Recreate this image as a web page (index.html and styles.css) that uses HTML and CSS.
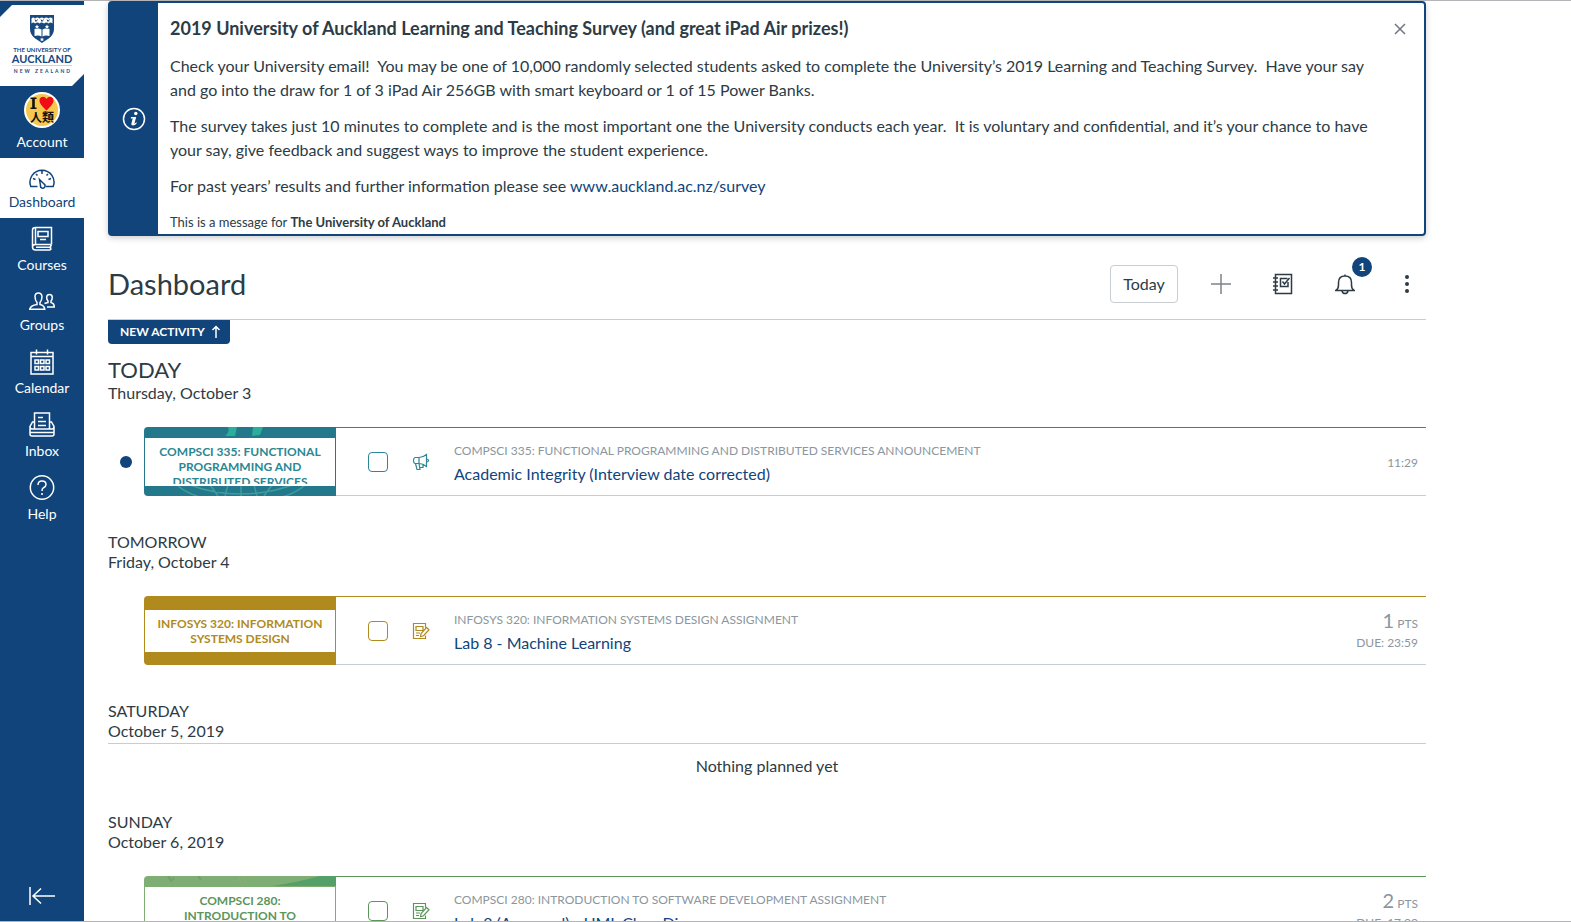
FILE: index.html
```html
<!DOCTYPE html>
<html lang="en">
<head>
<meta charset="utf-8">
<title>Dashboard</title>
<meta name="viewport" content="width=device-width, initial-scale=1">
<link rel="stylesheet" href="styles.css">
</head>
<body>
<svg width="0" height="0" class="defs" aria-hidden="true">
  <symbol id="i-assign" viewBox="0 0 18 18"><path d="M13.500 5.500V1.500H1.500V16.500H13.500V13.500M4 4.500h7v4H4zM4 11h4M4 13.500h3M14.500 5.500l2.500 2.200-5.500 6-3 1 .6-3.200z"/></symbol>
</svg>
<div class="app">
  <nav class="sidebar" aria-label="Global navigation">
    <a class="logo" href="#" aria-label="The University of Auckland">
      <svg viewBox="0 1 84 85" width="84" height="85">
        <path d="M12 5H84V74L72 86H0V17z" fill="#fff"/>
        <path d="M30 15H54V29c0 7-6 10-12 14c-6-4-12-7-12-14z" fill="#17497e"/>
        <path d="M31.500 23.500v-5q1.500-2 3.500 0q2.500-2 4.500 0q2.500-2 4.500 0q2.500-2 4.500 0q2-2 4 0v5q-2-2-4 0q-2-2-4.500 0q-2.500-2-4.500 0q-2-2-4.500 0q-1.500-2-3.500 0z" fill="#fff"/>
        <path d="M35 19.500l1 2 1.500-2M41 19.500l1 2 1.500-2M47 19.500l1 2 1.500-2" stroke="#17497e" fill="none"/>
        <path d="M34.500 29q4-1.200 7 .5v7q-3-1.500-7-.5zM49.500 29q-4-1.200-7 .5v7q3-1.500 7-.5z" fill="#fff"/>
        <path d="M37 24.500l.7 1.500h1.500l-1.200 1 .5 1.500-1.500-.8-1.500.8.500-1.500-1.200-1h1.500zM47 24.500l.7 1.500h1.500l-1.200 1 .5 1.500-1.500-.8-1.500.8.500-1.500-1.200-1h1.500zM42 37.500l.7 1.300h1.500l-1.200 1 .5 1.500-1.500-.8-1.500.8.500-1.500-1.200-1h1.500z" fill="#fff"/>
        <path d="M12 65.500H72" stroke="#c9d3df"/>
        <g fill="#17497e" text-anchor="middle" class="logo-text">
          <text x="42" y="52" class="logo-s">THE UNIVERSITY OF</text>
          <text x="42" y="63" class="logo-l">AUCKLAND</text>
          <text x="43" y="73" class="logo-n">NEW ZEALAND</text>
        </g>
      </svg>
    </a>
    <a class="nav-item account" href="#">
      <svg viewBox="0 0 36 36" width="36" height="36">
        <circle cx="18" cy="18" r="17" fill="#f7c84e" stroke="#fff" stroke-width="2"/>
        <path d="M6.500 5.500h6v1.500h-1.700v8.500h1.700v1.500h-6v-1.500h1.700v-8.500h-1.700z" fill="#111"/>
        <path d="M22.500 18.500C18 14 15.500 11.500 15.500 8.500c0-4 5-5 7-1.500c2-3.500 7-2.500 7 1.500c0 3-2.500 5.500-7 10z" fill="#f00b16"/>
        <text x="18" y="30" text-anchor="middle" class="avatar-text">人類</text>
      </svg>
      <span>Account</span>
    </a>
    <a class="nav-item active" href="#" aria-current="page">
      <svg class="icon" viewBox="0 0 26 26" width="26" height="26"><path d="M8.500 20.500H1.800A12 12 0 1 1 24.200 20.500H17M13 4.500v3.500M4 12.500l2.500 1M22 12.500l-2.500 1M7 8l1.500 1.500M19 8l-1.500 1.500M10.500 13.500l4.500 4.500a2.300 2.300 0 1 1-3.500 1.500z"/></svg>
      <span>Dashboard</span>
    </a>
    <a class="nav-item tall" href="#">
      <svg class="icon" viewBox="0 0 26 26" width="26" height="26"><path d="M22.500 18.500V1.500H6.500Q3.500 1.500 3.500 4V21Q3.500 24 6.500 24H21.500M22.500 18.500H6.500Q3.500 18.500 3.500 21M22.500 18.500Q20.500 21 22 24M7 21.300H21M6.500 1.500V18.500M9 5.500h10v5H9zM11 13.500h6"/></svg>
      <span>Courses</span>
    </a>
    <a class="nav-item" href="#">
      <svg class="icon" viewBox="0 0 26 26" width="26" height="26"><path d="M.7 20.300H15.800Q15.500 16.500 11 15.500V13.500Q13 11 13 7.500Q12.500 4 9.500 4Q6 4 6 7.500Q6 11 8 13.500V15.500Q1.500 16.500 .7 20.300zM15.500 14.500Q17 13.800 19 13.500V12Q17.500 10.500 17.700 8Q18 5.500 20.500 5.500Q23.300 5.500 23.300 8.500Q23.300 10.500 22 12V13.500Q25.300 14.500 25.300 18H18"/></svg>
      <span>Groups</span>
    </a>
    <a class="nav-item tall" href="#">
      <svg class="icon" viewBox="0 0 26 26" width="26" height="26"><path d="M2 3.500h22v21.500H2zM2 7.500h22M7.500 .5v5M18.500 .5v5M6 11h3.500v3.500H6zM11.500 11h3.500v3.500h-3.500zM17 11h3.500v3.500H17zM6 17.500h3.500V21H6zM11.500 17.500h3.500V21h-3.500zM17 17.500h3.500V21H17z"/></svg>
      <span>Calendar</span>
    </a>
    <a class="nav-item tall" href="#">
      <svg class="icon" viewBox="0 0 26 26" width="26" height="26"><path d="M5.500 17V1H20.500V17M5.500 10H3.500L1 14.500V22Q1 24 3 24H23Q25 24 25 22V14.500L22.500 10H20.500M1 14.500Q1 17 3 17H23Q25 17 25 14.500M1 20.500H25M9 5.500h5M9 9.500h8M9 13.500h8"/></svg>
      <span>Inbox</span>
    </a>
    <a class="nav-item tall" href="#">
      <svg class="icon" viewBox="0 0 26 26" width="26" height="26"><circle cx="13" cy="12.500" r="11.700"/><path d="M9 10Q9 6 13 6Q17 6 17 9.500Q17 11.500 14.500 12.700Q13 13.500 13 16M13 18v2"/></svg>
      <span>Help</span>
    </a>
    <button class="collapse" type="button" aria-label="Minimise navigation">
      <svg class="icon" viewBox="0 0 28 20" width="28" height="20"><path d="M2 1v18M27 10H5M13 2.500L5 10l8 7.500"/></svg>
    </button>
  </nav>

  <main class="main">
    <section class="notice">
      <div class="notice-side">
        <svg viewBox="0 0 24 24" width="24" height="24"><circle cx="12" cy="12" r="10.500" fill="none" stroke="#fff" stroke-width="1.500"/><circle cx="13.800" cy="6.500" r="1.700" fill="#fff"/><path d="M9 10h5.200l-1.800 6.500q.8 0 1.800-1.200l.7.600q-1.800 2.600-4 2.600q-2 0-1.500-2l1.300-5h-1.900z" fill="#fff"/></svg>
      </div>
      <div class="notice-body">
        <h2>2019 University of Auckland Learning and Teaching Survey (and great iPad Air prizes!)</h2>
        <p>Check your University email!&nbsp; You may be one of 10,000 randomly selected students asked to complete the University’s 2019 Learning and Teaching Survey.&nbsp; Have your say and go into the draw for 1 of 3 iPad Air 256GB with smart keyboard or 1 of 15 Power Banks.</p>
        <p>The survey takes just 10 minutes to complete and is the most important one the University conducts each year.&nbsp; It is voluntary and confidential, and it’s your chance to have your say, give feedback and suggest ways to improve the student experience.</p>
        <p>For past years’ results and further information please see <a href="#">www.auckland.ac.nz/survey</a></p>
        <small>This is a message for <b>The University of Auckland</b></small>
      </div>
      <button class="close" type="button" aria-label="Close"><svg viewBox="0 0 12 12" width="12" height="12"><path d="M1 1l10 10M11 1L1 11" stroke="#6f7780" stroke-width="1.500"/></svg></button>
    </section>

    <header class="head">
      <h1>Dashboard</h1>
      <button class="today" type="button">Today</button>
      <button class="tool" type="button" aria-label="Add to do"><svg viewBox="0 0 22 22" width="22" height="22"><path d="M11 1v20M1 11h20" stroke="#7d848b" stroke-width="1.500"/></svg></button>
      <button class="tool" type="button" aria-label="Grades"><svg class="icon" viewBox="0 0 22 22" width="22" height="22"><path d="M3.500 1.500h16v19h-16zM1 5h5M1 9h5M1 13h5M1 17h5M15.500 5.500H8.500v8h7.500V9M10.500 8.500l2 2.500 5-6"/></svg></button>
      <button class="tool" type="button" aria-label="Notifications"><svg class="icon" viewBox="0 0 22 22" width="22" height="22"><path d="M1 17.500h20M2 17.500Q4.500 16 4.500 12V9.500Q4.500 3 11 3Q17.500 3 17.500 9.500V12Q17.500 16 20 17.500M11 1.500v1.500M8 18Q8.500 20.500 11 20.500Q13.500 20.500 14 18"/></svg><span class="badge">1</span></button>
      <button class="tool" type="button" aria-label="Options"><svg viewBox="0 0 22 22" width="22" height="22" fill="#2d3b45"><circle cx="11" cy="4" r="2"/><circle cx="11" cy="11" r="2"/><circle cx="11" cy="18" r="2"/></svg></button>
    </header>
    <button class="activity" type="button">New activity <svg viewBox="0 0 10 14" width="10" height="14"><path d="M5 13V1.500M1.500 5L5 1.500 8.500 5" fill="none" stroke="#fff" stroke-width="1.500"/></svg></button>

    <section class="day">
      <h2 class="big">Today</h2>
      <p class="date">Thursday, October 3</p>
      <div class="row teal">
        <span class="dot"></span>
        <a class="card" href="#">
          <svg class="card-art" viewBox="0 0 192 69" width="192" height="69" fill="none"><path d="M81 9Q86 5 84 0h9l-2 9zM108 9l1-9h10l-3 8z" fill="#29ae9c"/><g stroke="#3e9c9d" stroke-width="1.500"><path d="M33 58Q42 66 56 70M161 58Q152 66 138 70M46 58Q70 67 97 67Q124 67 148 58M97 58v11M66 58l8 11M128 58l-8 11M84 58l-3 11M110 58l3 11"/></g></svg>
          <span class="card-box"><span class="card-name">COMPSCI 335: FUNCTIONAL PROGRAMMING AND DISTRIBUTED SERVICES</span></span>
        </a>
        <div class="row-body">
          <input type="checkbox" aria-label="Academic Integrity (Interview date corrected)">
          <svg class="icon kind" viewBox="0 0 18 18" width="18" height="18"><path d="M14.500 1.500V13.500Q11 10.500 7 10.500H3Q1.500 10 1.500 7.500Q1.500 5 3 4.500H7Q11 4.500 14.500 1.500zM14.500 6Q16.500 6 16.500 7.500Q16.500 9 14.500 9M7 4.500v6M3.500 10.500l1.500 6h3l-1-6M11 11.500v3H8"/></svg>
          <div class="info"><span class="course">COMPSCI 335: FUNCTIONAL PROGRAMMING AND DISTRIBUTED SERVICES ANNOUNCEMENT</span><a href="#">Academic Integrity (Interview date corrected)</a></div>
          <div class="meta"><span>11:29</span></div>
        </div>
      </div>
    </section>

    <section class="day">
      <h2>Tomorrow</h2>
      <p class="date">Friday, October 4</p>
      <div class="row gold">
        <span></span>
        <a class="card" href="#"><span class="card-box"><span class="card-name">INFOSYS 320: INFORMATION SYSTEMS DESIGN</span></span></a>
        <div class="row-body">
          <input type="checkbox" aria-label="Lab 8 - Machine Learning">
          <svg class="icon kind" width="18" height="18"><use href="#i-assign"/></svg>
          <div class="info"><span class="course">INFOSYS 320: INFORMATION SYSTEMS DESIGN ASSIGNMENT</span><a href="#">Lab 8 - Machine Learning</a></div>
          <div class="meta"><span><b>1</b> PTS</span><span>DUE: 23:59</span></div>
        </div>
      </div>
    </section>

    <section class="day">
      <h2>Saturday</h2>
      <p class="date">October 5, 2019</p>
      <p class="empty">Nothing planned yet</p>
    </section>

    <section class="day">
      <h2>Sunday</h2>
      <p class="date">October 6, 2019</p>
      <div class="row green">
        <span></span>
        <a class="card" href="#">
          <svg class="card-art" viewBox="0 0 192 69" width="192" height="69" fill="none"><path d="M128 10Q155 6 176 0h16v10z" fill="#559f69"/><path d="M96 0Q94 5 99 10M101 0Q99 5 104 10" stroke="#8fae71"/><path d="M24 0l3 5 3-3M54 0l3 4" stroke="#6ba36b" stroke-width="2"/></svg>
          <span class="card-box"><span class="card-name">COMPSCI 280: INTRODUCTION TO SOFTWARE DEVELOPMENT</span></span>
        </a>
        <div class="row-body">
          <input type="checkbox" aria-label="Lab 8 (Assessed) - UML Class Diagrams">
          <svg class="icon kind" width="18" height="18"><use href="#i-assign"/></svg>
          <div class="info"><span class="course">COMPSCI 280: INTRODUCTION TO SOFTWARE DEVELOPMENT ASSIGNMENT</span><a href="#">Lab 8 (Assessed) - UML Class Diagrams</a></div>
          <div class="meta"><span><b>2</b> PTS</span><span>DUE: 17:00</span></div>
        </div>
      </div>
    </section>
  </main>
</div>
</body>
</html>
```
FILE: styles.css
```css
* { box-sizing: border-box; }
body {
  margin: 0;
  font: 16px/24px Lato, "Noto Sans CJK SC", sans-serif;
  color: #2d3b45;
  background: #fff;
}
h1, h2, p { margin: 0; font-weight: 400; }
a { color: #10447a; text-decoration: none; }
button { font: inherit; color: inherit; background: none; border: 0; padding: 0; cursor: pointer; }
svg { display: block; flex: none; }
.defs { position: absolute; }
.icon { fill: none; stroke: currentColor; stroke-width: 1.5; }

.app {
  display: flex;
  height: 100vh;
  overflow: hidden;
  border-top: 1px solid #b4b4b8;
  border-bottom: 1px solid #b4b4b8;
}

.sidebar {
  flex: none;
  width: 84px;
  display: flex;
  flex-direction: column;
  background: #10447a;
}
.logo-text { font-family: Lato, sans-serif; }
.logo-s { font-size: 6px; font-weight: 700; }
.logo-l { font-size: 11px; font-weight: 700; }
.logo-n { font-size: 5px; font-weight: 700; letter-spacing: 2px; }
.avatar-text { font: 700 12px "Noto Sans CJK JP", sans-serif; fill: #111; }
.nav-item {
  display: flex;
  flex-direction: column;
  align-items: center;
  padding: 8px 0 6px;
  color: #fff;
  font-size: 14px;
  line-height: 20px;
}
.nav-item.tall { gap: 3px; }
.nav-item.account { padding-top: 6px; gap: 4px; }
.nav-item.active { background: #fff; color: #10447a; }
.collapse { margin-top: auto; height: 50px; display: grid; place-items: center; color: #fff; }

.main { flex: 1; max-width: 1366px; padding: 0 24px; }

.notice {
  display: flex;
  border: 2px solid #10447a;
  border-radius: 4px;
  box-shadow: 0 2px 6px rgba(0, 0, 0, 0.2);
}
.notice-side { flex: none; width: 48px; display: grid; place-items: center; background: #10447a; }
.notice-body { flex: 1; padding: 11px 0 0 12px; }
.notice-body h2 { font-size: 18px; font-weight: 700; line-height: 28px; margin-bottom: 12px; }
.notice-body p { margin-bottom: 12px; }
.notice-body small { display: block; font-size: 13px; }
.close { align-self: flex-start; width: 48px; height: 52px; display: grid; place-items: center; }

.head {
  display: flex;
  align-items: center;
  gap: 40px;
  height: 84px;
  padding: 12px 8px 0 0;
  border-bottom: 1px solid #c7cdd1;
}
.head h1 { margin-right: auto; font-size: 29px; line-height: 36px; }
.today { width: 68px; height: 38px; margin-right: -8px; border: 1px solid #c7cdd1; border-radius: 4px; }
.tool { position: relative; }
.badge {
  position: absolute;
  right: -16px;
  top: -16px;
  width: 20px;
  height: 20px;
  border-radius: 50%;
  background: #10447a;
  color: #fff;
  font-size: 12px;
  font-weight: 700;
  line-height: 20px;
}
.activity {
  display: flex;
  align-items: center;
  gap: 6px;
  height: 24px;
  padding: 0 9px 0 12px;
  border-radius: 0 0 4px 4px;
  background: #10447a;
  color: #fff;
  font-size: 12px;
  font-weight: 700;
  text-transform: uppercase;
}

.day { margin-bottom: 35px; padding-top: 1px; line-height: 20px; }
.activity + .day { padding-top: 13px; }
.day h2 { font-size: 16px; text-transform: uppercase; }
.day h2.big { font-size: 22px; line-height: 26px; }
.row {
  display: grid;
  grid-template-columns: 36px 192px 1fr;
  align-items: center;
  margin-top: 24px;
}
.teal { --c: #24788c; --t: #2a8793; }
.gold { --c: #b08a1c; --t: #b08a1c; }
.green { --c: #7fae75; --t: #5b955a; }
.dot { justify-self: center; width: 12px; height: 12px; border-radius: 50%; background: #10447a; }
.card {
  position: relative;
  display: flex;
  align-items: center;
  height: 69px;
  padding: 0 1px;
  border-radius: 4px 0 0 4px;
  background: var(--c);
  overflow: hidden;
}
.card-art { position: absolute; left: 0; top: 0; }
.card-box {
  position: relative;
  flex: 1;
  max-height: 48px;
  padding: 6px 12px;
  overflow: hidden;
  background: #fff;
}
.card-name {
  display: block;
  max-height: 40px;
  overflow: hidden;
  color: var(--t);
  font-size: 12px;
  font-weight: 700;
  line-height: 15px;
  text-align: center;
}
.row-body {
  display: flex;
  align-items: center;
  height: 69px;
  padding: 0 8px 0 32px;
  border-top: 1px solid var(--t);
  border-bottom: 1px solid #c7cdd1;
}
.row-body input {
  appearance: none;
  flex: none;
  width: 20px;
  height: 20px;
  margin: 0;
  border: 1px solid var(--t);
  border-radius: 4px;
}
.kind { margin: 0 24px; color: var(--t); stroke-width: 1.2; }
.info { flex: 1; display: flex; flex-direction: column; gap: 1px; padding-top: 3px; }
.info a { line-height: 24px; }
.course, .meta { font-size: 12px; color: #8b969e; }
.meta { display: flex; flex-direction: column; padding-top: 2px; line-height: 19px; text-align: right; }
.meta b { font-size: 20px; font-weight: 400; }
.empty { margin-top: 2px; padding-top: 12px; border-top: 1px solid #c7cdd1; text-align: center; }
```
